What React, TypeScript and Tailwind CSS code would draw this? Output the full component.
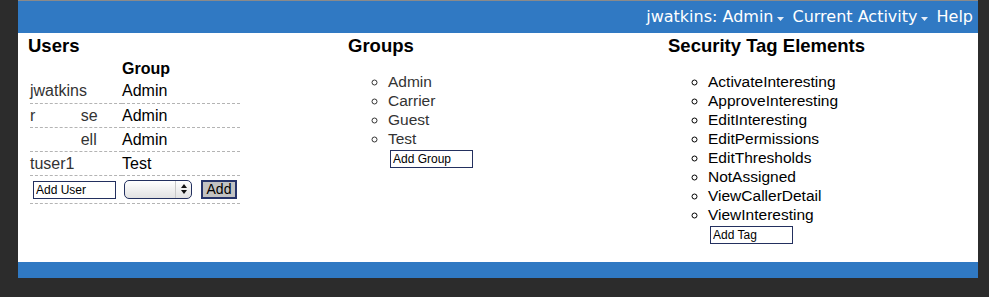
import React from "react";

const FONT = { fontFamily: '"Liberation Sans", Arial, sans-serif' };
const MENU_FONT = { fontFamily: '"DejaVu Sans", Verdana, sans-serif' };

function Caret() {
  return (
    <svg width="7" height="4" viewBox="0 0 7 4" className="ml-[3px] mr-[9px] mt-[3px]">
      <path d="M0 0 L7 0 L3.5 4 Z" fill="#e6eef8" />
    </svg>
  );
}

type UserRow = { lead: string; hidden: string; tail: string; group: string };

const users: UserRow[] = [
  { lead: "jwatkins", hidden: "", tail: "", group: "Admin" },
  { lead: "r", hidden: "monro", tail: "se", group: "Admin" },
  { lead: "", hidden: "mcdow", tail: "ell", group: "Admin" },
  { lead: "tuser1", hidden: "", tail: "", group: "Test" },
];

const groups = ["Admin", "Carrier", "Guest", "Test"];

const tags = [
  "ActivateInteresting",
  "ApproveInteresting",
  "EditInteresting",
  "EditPermissions",
  "EditThresholds",
  "NotAssigned",
  "ViewCallerDetail",
  "ViewInteresting",
];

function SmallInput({ value, className }: { value: string; className?: string }) {
  return (
    <input
      readOnly
      value={value}
      className={
        "h-[18px] w-[83px] border border-[#23305f] bg-white px-[2px] text-[12px] leading-none text-black outline-none " +
        (className ?? "")
      }
    />
  );
}

export default function App() {
  return (
    <div className="h-[297px] w-[989px] bg-[#2c2c2c] pl-[18px] pr-[11px]" style={FONT}>
      {/* top menu bar */}
      <div className="border-t border-[#8a8a8a]">
        <div
          className="flex h-[32px] items-center justify-end bg-[#3079c3] pr-[5px] text-[16px] text-white"
          style={MENU_FONT}
        >
          <span>jwatkins: Admin</span>
          <Caret />
          <span>Current Activity</span>
          <Caret />
          <span>Help</span>
        </div>
      </div>

      {/* main */}
      <div className="grid h-[229px] grid-cols-[320px_320px_1fr] bg-white pl-[10px]">
        {/* users */}
        <div>
          <h2 className="mt-[1px] text-[18.5px] font-bold leading-[24px] text-black">Users</h2>
          <table className="ml-[2px] mt-[1px] w-[210px] border-collapse text-[16px]">
            <thead>
              <tr className="h-[20px]">
                <th className="w-[92px]"></th>
                <th className="text-left font-bold leading-[20px] text-black">Group</th>
              </tr>
            </thead>
            <tbody>
              {users.map((u, i) => (
                <tr key={i} className="h-[24px] border-b border-dashed border-[#b4b4b4]">
                  <td className="p-0 leading-[23px] text-[#333]">
                    {u.lead}
                    <span className="text-white">{u.hidden}</span>
                    {u.tail}
                  </td>
                  <td className="p-0 leading-[23px] text-black">{u.group}</td>
                </tr>
              ))}
              <tr className="h-[28px] border-b border-dashed border-[#b4b4b4]">
                <td className="p-0 pl-[3px]">
                  <SmallInput value="Add User" />
                </td>
                <td className="p-0">
                  <div className="flex items-center">
                    <div className="ml-[2px] flex h-[19px] w-[68px] items-center justify-end rounded-[5px] border border-[#23305f] bg-gradient-to-b from-white to-[#e2e2e2]">
                      <div className="flex h-full w-[16px] items-center justify-center border-l border-[#c8c8c8]">
                        <svg width="6" height="10" viewBox="0 0 6 10">
                          <path d="M0 4 L3 0 L6 4 Z M0 6 L3 10 L6 6 Z" fill="#111" />
                        </svg>
                      </div>
                    </div>
                    <button className="ml-[9px] h-[19px] w-[36px] border-2 border-[#26346a] bg-[#c2c2c2] text-[14px] leading-none text-black">
                      Add
                    </button>
                  </div>
                </td>
              </tr>
            </tbody>
          </table>
        </div>

        {/* groups */}
        <div>
          <h2 className="mt-[1px] text-[18.5px] font-bold leading-[24px] text-black">Groups</h2>
          <ul className="mt-[14px] list-[circle] pl-[40px] text-[15.5px] leading-[19px] text-[#333]">
            {groups.map((g) => (
              <li key={g}>{g}</li>
            ))}
          </ul>
          <SmallInput value="Add Group" className="ml-[42px] mt-[2px] block" />
        </div>

        {/* security tags */}
        <div>
          <h2 className="mt-[1px] text-[18.5px] font-bold leading-[24px] text-black">Security Tag Elements</h2>
          <ul className="mt-[14px] list-[circle] pl-[40px] text-[15.5px] leading-[19px] text-black">
            {tags.map((t) => (
              <li key={t}>{t}</li>
            ))}
          </ul>
          <SmallInput value="Add Tag" className="ml-[42px] mt-[2px] block" />
        </div>
      </div>

      {/* footer bar */}
      <div className="h-[16px] bg-[#3079c3]"></div>
    </div>
  );
}
